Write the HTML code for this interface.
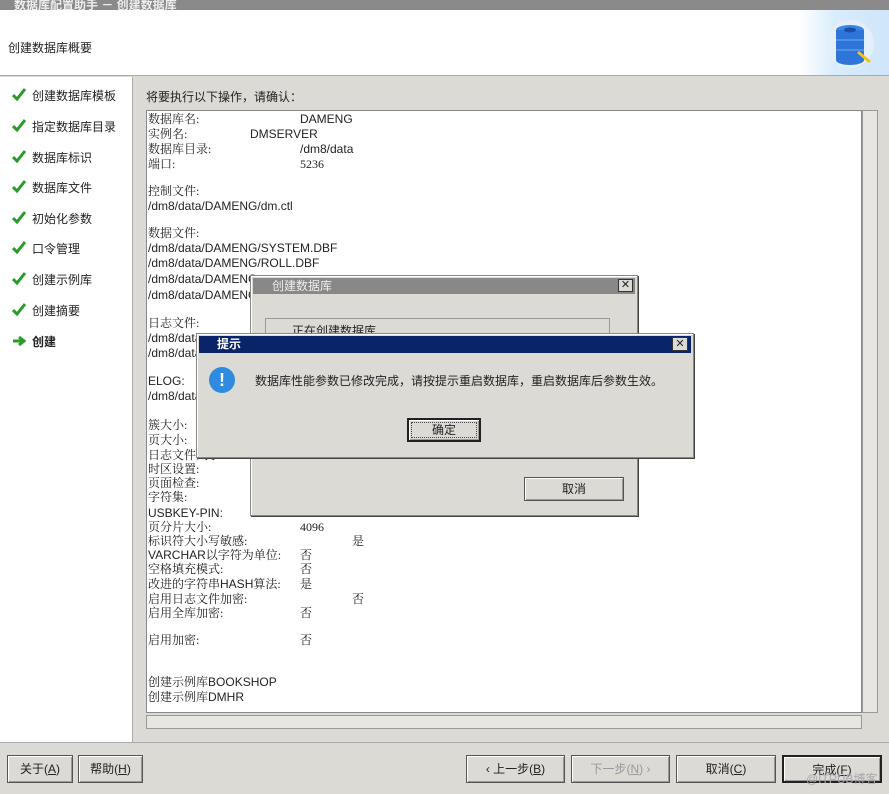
<!DOCTYPE html>
<html><head><meta charset="utf-8"><style>
*{margin:0;padding:0;box-sizing:border-box}
body{width:889px;height:794px;position:relative;overflow:hidden;background:#dcdad5;font-family:"Liberation Sans","Noto Sans CJK SC",sans-serif;font-size:12px;color:#222}
.a{position:absolute;white-space:nowrap}
.btn{position:absolute;border:1px solid #555;background:#dcdad5;box-shadow:inset 1px 1px #fff,inset -1px -1px #999;text-align:center;font-size:12px;line-height:26px}
.t{position:absolute;white-space:nowrap;font-family:"Liberation Serif","Noto Serif CJK SC",serif;font-size:12px;line-height:14px;color:#222}
.s{font-family:"Liberation Sans","Noto Sans CJK SC",sans-serif}
.chk{position:absolute;left:12px;width:14px;height:14px}
.li{position:absolute;left:32px;font-size:12px}
</style></head><body>
<div class="a" style="left:0;top:0;width:889px;height:10px;background:#8a8a8a"></div>
<div class="a" style="left:14px;top:-4px;color:#eee;font-size:12px;font-weight:bold">数据库配置助手 － 创建数据库</div>
<div class="a" style="left:0;top:10px;width:889px;height:66px;background:#fff;border-bottom:1px solid #aaa"></div>
<div class="a" style="left:800px;top:10px;width:89px;height:65px;background:linear-gradient(90deg,#fff,#d8ecfb 40%,#cfe6fa)"></div>
<svg class="a" style="left:820px;top:14px" width="66" height="58"><circle cx="30" cy="30" r="24" fill="#e3f0fc"/><ellipse cx="30" cy="16" rx="14" ry="5" fill="#3a86e6"/><rect x="16" y="16" width="28" height="30" fill="#2f74d8"/><ellipse cx="30" cy="46" rx="14" ry="5" fill="#2f74d8"/><ellipse cx="30" cy="16" rx="6" ry="2.5" fill="#1a4fa8"/><line x1="16" y1="26" x2="44" y2="26" stroke="#6aaef0"/><line x1="16" y1="36" x2="44" y2="36" stroke="#6aaef0"/><path d="M38 38l12 10" stroke="#f0c020" stroke-width="3"/></svg>
<div class="a" style="left:8px;top:39px;font-size:12px">创建数据库概要</div>
<div class="a" style="left:0;top:77px;width:133px;height:665px;background:#fff;border-right:1px solid #aaa"></div>
<svg width="0" height="0"><defs><path id="ck" d="M1 7l4 4 8-10" stroke="#2a9a2a" stroke-width="3" fill="none"/></defs></svg>
<svg class="chk" style="top:88px"><use href="#ck"/></svg><div class="a li" style="top:87px">创建数据库模板</div>
<svg class="chk" style="top:119px"><use href="#ck"/></svg><div class="a li" style="top:118px">指定数据库目录</div>
<svg class="chk" style="top:150px"><use href="#ck"/></svg><div class="a li" style="top:149px">数据库标识</div>
<svg class="chk" style="top:180px"><use href="#ck"/></svg><div class="a li" style="top:179px">数据库文件</div>
<svg class="chk" style="top:211px"><use href="#ck"/></svg><div class="a li" style="top:210px">初始化参数</div>
<svg class="chk" style="top:241px"><use href="#ck"/></svg><div class="a li" style="top:240px">口令管理</div>
<svg class="chk" style="top:272px"><use href="#ck"/></svg><div class="a li" style="top:271px">创建示例库</div>
<svg class="chk" style="top:303px"><use href="#ck"/></svg><div class="a li" style="top:302px">创建摘要</div>
<svg class="chk" style="top:334px"><path d="M1 7h9M7 3l5 4-5 4" stroke="#2a9a2a" stroke-width="3" fill="none"/></svg><div class="a li" style="top:333px;font-weight:bold">创建</div>
<div class="a" style="left:146px;top:88px;font-size:12px">将要执行以下操作，请确认：</div>
<div class="a" style="left:146px;top:110px;width:716px;height:603px;background:#fff;border:1px solid #888"></div>
<div class="a" style="left:862px;top:110px;width:16px;height:603px;background:#e8e6e2;border:1px solid #999"></div>
<div class="a" style="left:146px;top:715px;width:716px;height:14px;background:#e8e6e2;border:1px solid #999"></div>
<div class="t" style="left:148px;top:112px">数据库名:</div><div class="t s" style="left:300px;top:112px">DAMENG</div>
<div class="t" style="left:148px;top:127px">实例名:</div><div class="t s" style="left:250px;top:127px">DMSERVER</div>
<div class="t" style="left:148px;top:142px">数据库目录:</div><div class="t s" style="left:300px;top:142px">/dm8/data</div>
<div class="t" style="left:148px;top:157px">端口:</div><div class="t" style="left:300px;top:157px">5236</div>
<div class="t" style="left:148px;top:184px">控制文件:</div>
<div class="t s" style="left:148px;top:199px">/dm8/data/DAMENG/dm.ctl</div>
<div class="t" style="left:148px;top:226px">数据文件:</div>
<div class="t s" style="left:148px;top:241px">/dm8/data/DAMENG/SYSTEM.DBF</div>
<div class="t s" style="left:148px;top:256px">/dm8/data/DAMENG/ROLL.DBF</div>
<div class="t s" style="left:148px;top:272px">/dm8/data/DAMENG</div>
<div class="t s" style="left:148px;top:288px">/dm8/data/DAMENG</div>
<div class="t" style="left:148px;top:316px">日志文件:</div>
<div class="t s" style="left:148px;top:331px">/dm8/data</div>
<div class="t s" style="left:148px;top:346px">/dm8/data</div>
<div class="t s" style="left:148px;top:374px">ELOG:</div>
<div class="t s" style="left:148px;top:389px">/dm8/data</div>
<div class="t" style="left:148px;top:418px">簇大小:</div>
<div class="t" style="left:148px;top:433px">页大小:</div>
<div class="t" style="left:148px;top:448px">日志文件大小:</div>
<div class="t" style="left:148px;top:462px">时区设置:</div>
<div class="t" style="left:148px;top:476px">页面检查:</div>
<div class="t" style="left:148px;top:490px">字符集:</div>
<div class="t s" style="left:148px;top:506px">USBKEY-PIN:</div>
<div class="t" style="left:148px;top:520px">页分片大小:</div><div class="t" style="left:300px;top:520px">4096</div>
<div class="t" style="left:148px;top:534px">标识符大小写敏感:</div><div class="t" style="left:352px;top:534px">是</div>
<div class="t" style="left:148px;top:548px"><span class="s">VARCHAR</span>以字符为单位:</div><div class="t" style="left:300px;top:548px">否</div>
<div class="t" style="left:148px;top:562px">空格填充模式:</div><div class="t" style="left:300px;top:562px">否</div>
<div class="t" style="left:148px;top:577px">改进的字符串<span class="s">HASH</span>算法:</div><div class="t" style="left:300px;top:577px">是</div>
<div class="t" style="left:148px;top:592px">启用日志文件加密:</div><div class="t" style="left:352px;top:592px">否</div>
<div class="t" style="left:148px;top:606px">启用全库加密:</div><div class="t" style="left:300px;top:606px">否</div>
<div class="t" style="left:148px;top:633px">启用加密:</div><div class="t" style="left:300px;top:633px">否</div>
<div class="t" style="left:148px;top:675px">创建示例库<span class="s">BOOKSHOP</span></div>
<div class="t" style="left:148px;top:690px">创建示例库<span class="s">DMHR</span></div>

<div class="a" style="left:250px;top:275px;width:388px;height:241px;background:#dcdad5;border:1px solid #888;box-shadow:inset 1px 1px #fff,1px 1px #444"></div>
<div class="a" style="left:253px;top:278px;width:382px;height:16px;background:#888"></div>
<div class="a" style="left:272px;top:278px;color:#eee;font-size:12px;line-height:16px">创建数据库</div>
<div class="a" style="left:618px;top:279px;width:15px;height:13px;background:#dcdad5;border:1px solid #333;font-size:11px;line-height:11px;text-align:center">✕</div>
<div class="a" style="left:265px;top:318px;width:345px;height:20px;border:1px solid #999"></div>
<div class="a" style="left:292px;top:322px">正在创建数据库</div>
<div class="btn" style="left:524px;top:477px;width:100px;height:24px;line-height:22px">取消</div>

<div class="a" style="left:196px;top:333px;width:498px;height:125px;background:#dcdad5;border:1px solid #888;box-shadow:inset 1px 1px #fff,1px 1px #444"></div>
<div class="a" style="left:199px;top:336px;width:492px;height:17px;background:#0a246a"></div>
<div class="a" style="left:217px;top:336px;color:#fff;font-size:12px;font-weight:bold;line-height:17px">提示</div>
<div class="a" style="left:672px;top:337px;width:16px;height:14px;background:#dcdad5;border:1px solid #333;font-size:11px;line-height:12px;text-align:center">✕</div>
<div class="a" style="left:209px;top:367px;width:26px;height:26px;border-radius:50%;background:#2e8be0;color:#fff;font-weight:bold;font-size:18px;line-height:26px;text-align:center">!</div>
<div class="a" style="left:255px;top:372px">数据库性能参数已修改完成，请按提示重启数据库，重启数据库后参数生效。</div>
<div class="btn" style="left:407px;top:418px;width:74px;height:24px;line-height:20px;border:2px solid #222"><div style="border:1px dotted #444;margin:2px;height:16px;line-height:15px">确定</div></div>

<div class="a" style="left:0;top:742px;width:889px;height:1px;background:#aaa"></div>
<div class="btn" style="left:7px;top:755px;width:66px;height:28px">关于(<u>A</u>)</div>
<div class="btn" style="left:78px;top:755px;width:65px;height:28px">帮助(<u>H</u>)</div>
<div class="btn" style="left:466px;top:755px;width:99px;height:28px">‹ 上一步(<u>B</u>)</div>
<div class="btn" style="left:571px;top:755px;width:99px;height:28px;color:#999">下一步(<u>N</u>) ›</div>
<div class="btn" style="left:676px;top:755px;width:100px;height:28px">取消(<u>C</u>)</div>
<div class="btn" style="left:782px;top:755px;width:100px;height:28px;border:2px solid #222">完成(<u>F</u>)</div>
<div class="a" style="left:806px;top:770px;color:#aaa;font-size:12px">@ITPUB博客</div>
</body></html>
